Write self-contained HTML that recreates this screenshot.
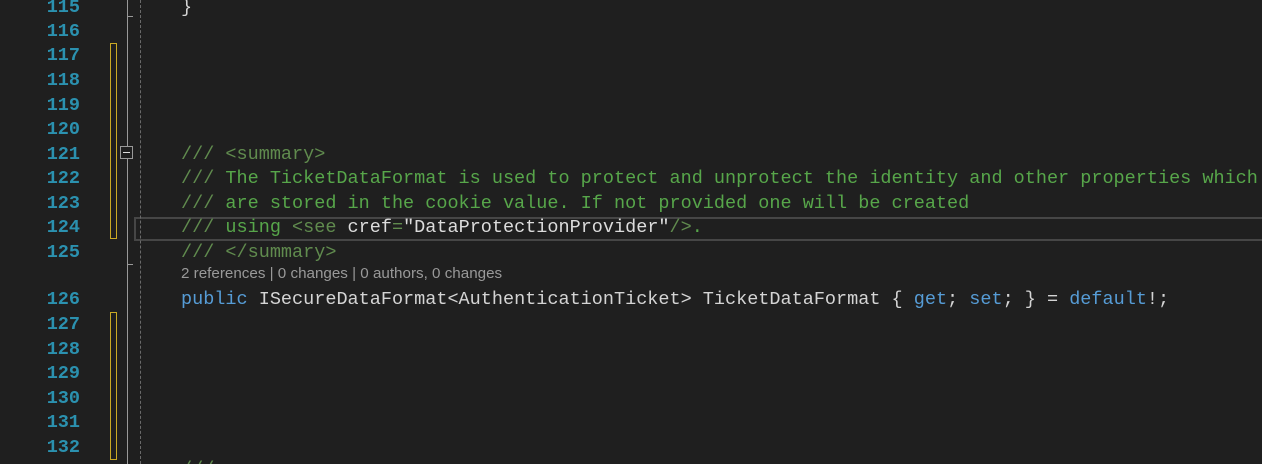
<!DOCTYPE html>
<html><head><style>
html,body{margin:0;padding:0;overflow:hidden;}
body{width:1262px;height:464px;background:#1f1f1f;position:relative;overflow:hidden;font-family:"Liberation Mono",monospace;}
.ln{position:absolute;left:0;width:80px;text-align:right;color:#2b91af;font-size:18.5px;line-height:24px;font-weight:bold;font-family:"Liberation Mono",monospace;}
.c{position:absolute;left:181px;font-size:18.5px;line-height:24px;white-space:pre;color:#d4d4d4;}
.g{color:#57a64a}.d{color:#608b4e}.k{color:#569cd6}.w{color:#dcdcdc}
</style></head><body>
<div style="position:absolute;left:134px;top:217px;width:1140px;height:20px;border:2px solid #464646;"></div>
<div style="position:absolute;left:127px;top:0;width:1px;height:464px;background:#999;"></div>
<div style="position:absolute;left:127px;top:16px;width:6px;height:1px;background:#999;"></div>
<div style="position:absolute;left:127px;top:264px;width:6px;height:1px;background:#999;"></div>
<div style="position:absolute;left:120px;top:146px;width:11px;height:11px;border:1px solid #999;background:#1f1f1f;"></div>
<div style="position:absolute;left:123px;top:152px;width:7px;height:1px;background:#ddd;"></div>
<div style="position:absolute;left:140px;top:0;width:0;height:464px;border-left:1px dashed #6a6a6a;"></div>
<div style="position:absolute;left:110px;top:43px;width:5px;height:194px;border:1px solid #c9a824;"></div>
<div style="position:absolute;left:110px;top:312px;width:5px;height:146px;border:1px solid #c9a824;"></div>

<div class="ln" style="top:-4px">115</div>
<div class="ln" style="top:20px">116</div>
<div class="ln" style="top:44px">117</div>
<div class="ln" style="top:69px">118</div>
<div class="ln" style="top:94px">119</div>
<div class="ln" style="top:118px">120</div>
<div class="ln" style="top:143px">121</div>
<div class="ln" style="top:167px">122</div>
<div class="ln" style="top:192px">123</div>
<div class="ln" style="top:216px">124</div>
<div class="ln" style="top:241px">125</div>
<div class="ln" style="top:288px">126</div>
<div class="ln" style="top:313px">127</div>
<div class="ln" style="top:338px">128</div>
<div class="ln" style="top:362px">129</div>
<div class="ln" style="top:387px">130</div>
<div class="ln" style="top:411px">131</div>
<div class="ln" style="top:436px">132</div>

<div class="c" style="top:-4px">}</div>
<div class="c" style="top:143px"><span class="d">/// &lt;summary&gt;</span></div>
<div class="c" style="top:167px"><span class="d">///</span><span class="g"> The TicketDataFormat is used to protect and unprotect the identity and other properties which</span></div>
<div class="c" style="top:192px"><span class="d">///</span><span class="g"> are stored in the cookie value. If not provided one will be created</span></div>
<div class="c" style="top:216px"><span class="d">///</span><span class="g"> using </span><span class="d">&lt;see </span><span class="w">cref</span><span class="d">=</span><span class="w">"DataProtectionProvider"</span><span class="d">/&gt;</span><span class="g">.</span></div>
<div class="c" style="top:241px"><span class="d">/// &lt;/summary&gt;</span></div>
<div style="position:absolute;left:181px;top:265px;font-family:'Liberation Sans',sans-serif;font-size:15.2px;color:#999;white-space:pre;">2 references | 0 changes | 0 authors, 0 changes</div>
<div class="c" style="top:288px"><span class="k">public</span> ISecureDataFormat&lt;AuthenticationTicket&gt; TicketDataFormat { <span class="k">get</span>; <span class="k">set</span>; } = <span class="k">default</span>!;</div>
<div class="c" style="top:458px"><span class="d">///</span></div>
</body></html>
